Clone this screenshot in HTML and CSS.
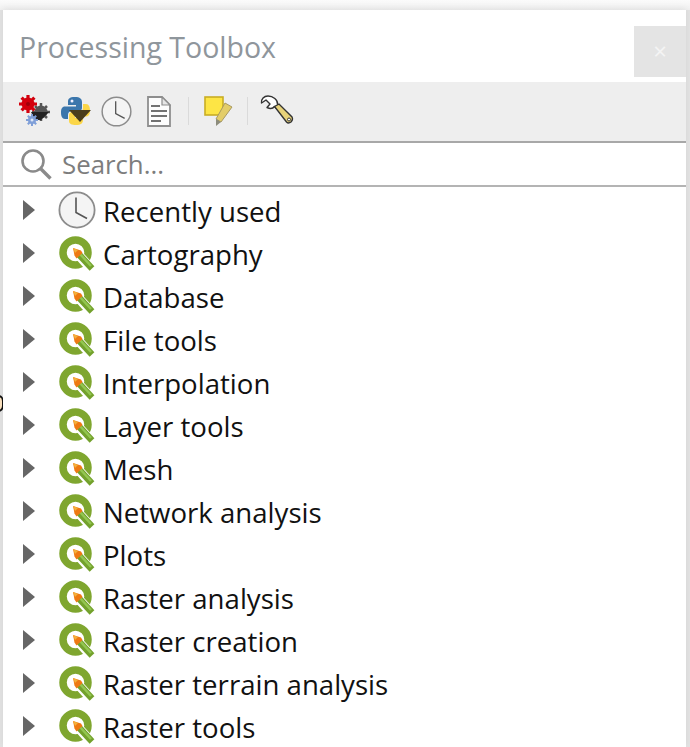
FILE: index.html
```html
<!DOCTYPE html>
<html>
<head>
    <title>Processing Toolbox</title>
    <link rel="stylesheet" href="styles.css">
</head>
<body>
    <svg class="defs" width="0" height="0">
        <symbol id="clock" viewBox="0 0 38 38">
            <circle cx="19" cy="19" r="17.6" fill="#f4f4f4" stroke="#8c8c8c" stroke-width="1.8"/>
            <path d="M18 6.500V21.500L29 27.500" fill="none" stroke="#555" stroke-width="1.600"/>
        </symbol>
        <symbol id="qgis" viewBox="0 0 37 37">
            <circle cx="17.500" cy="17.500" r="12.500" fill="none" stroke="#7fa62f" stroke-width="7.500"/>
            <path d="M17 16L37 38" stroke="#fff" stroke-width="9.500"/>
            <path d="M21 19.500L34 33.500" stroke="#73a12c" stroke-width="6.500"/>
            <path d="M21.500 18.500L33 31" stroke="#93c651" stroke-width="2.500"/>
            <path fill="#ee7913" d="M15 13L23 15.500 24.500 18 18.500 23.500 16.500 20.500Z"/>
            <path fill="#f3b03a" d="M15 13L20 15 17 18Z"/>
        </symbol>
    </svg>

    <span class="behind"></span>

    <div class="panel">
        <div class="title-bar">
            <h1 class="title">Processing Toolbox</h1>
            <div class="close-btn">&times;</div>
        </div>

        <div class="toolbar">
            <svg class="tool tool-gears" viewBox="0 0 34 32">
                <g fill="#555">
                    <circle cx="24" cy="17" r="6.500"/>
                    <path stroke="#555" stroke-width="2.500" d="M24 8V26M15 17H33M18 11L30 23M30 11L18 23"/>
                </g>
                <path fill="#222" d="M14 17H32L24 25H18Z"/>
                <g>
                    <circle cx="11" cy="9" r="6.500" fill="#d3000d"/>
                    <path stroke="#d3000d" stroke-width="3.200" d="M11 0V18M2 9H20M4.600 2.600L17.400 15.400M17.400 2.600L4.600 15.400"/>
                    <circle cx="11" cy="9" r="2" fill="#a0000a"/>
                </g>
                <g>
                    <circle cx="15" cy="25" r="4" fill="#7f9fd8"/>
                    <path stroke="#7f9fd8" stroke-width="2" d="M15 19V31M9 25H21M10.800 20.800L19.200 29.200M19.200 20.800L10.800 29.200"/>
                    <circle cx="15" cy="25" r="1.500" fill="#dce6f6"/>
                </g>
            </svg>
            <svg class="tool tool-python" viewBox="0 0 32 30">
                <path fill="#3b76ac" d="M15 1C9 1 8 3 8 6V9H16V10.500H5C2 10.500 1 13 1 16.500 1 20 2 23 5 23H8V19C8 16 10 15 12 15H19C21 15 22 13.500 22 12V6C22 3 20 1 15 1Z"/>
                <circle cx="12" cy="5" r="1.500" fill="#eef"/>
                <path fill="#fbd648" d="M23 8V12C23 15 21 16 19 16H12C10 16 9 17.500 9 19V25C9 28 12 29 16 29 21 29 23 27 23 24V22H15V20.500H26C29 20.500 30 18 30 14.500 30 11 29 8 26 8Z"/>
                <path fill="#4a3d1c" d="M9 14H31L20 26Z"/>
            </svg>
            <svg class="tool tool-clock"><use href="#clock"/></svg>
            <svg class="tool tool-doc" viewBox="0 0 24 31">
                <path fill="#fdfdfd" stroke="#8e8e8e" stroke-width="1.800" d="M1 1H15L23 9V30H1Z"/>
                <path fill="#e6e6e6" stroke="#8e8e8e" stroke-width="1.200" d="M15 1V9H23Z"/>
                <path fill="none" stroke="#444" stroke-width="1.500" d="M4 10H13M4 15H20M4 20H20M4 25H14"/>
            </svg>
            <span class="sep"></span>
            <svg class="tool tool-edit" viewBox="0 0 30 31">
                <rect x="1" y="1" width="18" height="18" fill="#fde545" stroke="#c9ad24" stroke-width="1.600"/>
                <path fill="#e3cd69" stroke="#a99a62" d="M21 7L28 11 17 26 12 23Z"/>
                <path fill="#8c8c7c" d="M12 23L17 26 12 30Z"/>
            </svg>
            <span class="sep"></span>
            <svg class="tool tool-wrench" viewBox="0 0 34 32">
                <path fill="#fff" stroke="#333" stroke-width="1.400" stroke-linejoin="round" d="M8 1C4 1 1 4 1.500 8L6 5 10 9 7 12.500C10 14 13 13.500 14.500 11.500L16 13 19 10.500 17.500 9C18 5 13 1 8 1Z"/>
                <path fill="#e7d27a" stroke="#333" stroke-width="1.400" d="M14.500 11.500L19 9 32 22C33 24 32 26 31 27 29 28.500 27.500 28 26.500 27Z"/>
                <circle cx="29" cy="24.500" r="1.500" fill="#fff" stroke="#333"/>
            </svg>
        </div>

        <div class="search">
            <svg class="search-icon" viewBox="0 0 32 32">
                <circle cx="13" cy="13" r="10.500" fill="none" stroke="#8a8a8a" stroke-width="2.600"/>
                <path d="M20.500 20.500L30.500 30.500" stroke="#8a8a8a" stroke-width="3.400"/>
            </svg>
            <span class="search-text">Search...</span>
        </div>

        <ul class="tree">
            <li class="row"><span class="arrow"></span><svg class="icon-clock"><use href="#clock"/></svg><span>Recently used</span></li>
            <li class="row"><span class="arrow"></span><svg class="icon"><use href="#qgis"/></svg><span>Cartography</span></li>
            <li class="row"><span class="arrow"></span><svg class="icon"><use href="#qgis"/></svg><span>Database</span></li>
            <li class="row"><span class="arrow"></span><svg class="icon"><use href="#qgis"/></svg><span>File tools</span></li>
            <li class="row"><span class="arrow"></span><svg class="icon"><use href="#qgis"/></svg><span>Interpolation</span></li>
            <li class="row"><span class="arrow"></span><svg class="icon"><use href="#qgis"/></svg><span>Layer tools</span></li>
            <li class="row"><span class="arrow"></span><svg class="icon"><use href="#qgis"/></svg><span>Mesh</span></li>
            <li class="row"><span class="arrow"></span><svg class="icon"><use href="#qgis"/></svg><span>Network analysis</span></li>
            <li class="row"><span class="arrow"></span><svg class="icon"><use href="#qgis"/></svg><span>Plots</span></li>
            <li class="row"><span class="arrow"></span><svg class="icon"><use href="#qgis"/></svg><span>Raster analysis</span></li>
            <li class="row"><span class="arrow"></span><svg class="icon"><use href="#qgis"/></svg><span>Raster creation</span></li>
            <li class="row"><span class="arrow"></span><svg class="icon"><use href="#qgis"/></svg><span>Raster terrain analysis</span></li>
            <li class="row"><span class="arrow"></span><svg class="icon"><use href="#qgis"/></svg><span>Raster tools</span></li>
        </ul>
    </div>
</body>
</html>
```

FILE: styles.css
```css
html, body {
    margin: 0;
    height: 100%;
    overflow: hidden;
}

body {
    background: linear-gradient(#fbfbfb, #f0f0f0 10px, #e2e2e2 10px);
    font-family: "Open Sans", "Noto Sans", sans-serif;
}

.defs {
    display: block;
    height: 0;
}

/* bit of the window under the panel, sticks out on the left */
.behind {
    position: absolute;
    left: -8px;
    top: 395px;
    width: 8px;
    height: 13px;
    border: 2px solid #111;
    border-radius: 6px;
    background: #fde3c0;
}

.panel {
    position: relative;
    margin: 10px 4px 0 3px;
    height: 737px;
    background: #fff;
    box-shadow: 0 -2px 6px rgba(0, 0, 0, 0.06);
}

.title-bar {
    height: 72px;
    box-sizing: border-box;
    padding: 15px 0 0 16px;
    display: flex;
    justify-content: space-between;
    align-items: flex-start;
}

.title {
    margin: 0;
    font-size: 28.500px;
    font-weight: 400;
    line-height: 44px;
    color: #8f969c;
}

.close-btn {
    width: 52px;
    height: 51px;
    margin-top: 1px;
    background: #e4e4e4;
    color: #f4f4f4;
    font-size: 24px;
    line-height: 50px;
    text-align: center;
}

.toolbar {
    height: 59px;
    background: #eeeeee;
    display: flex;
    align-items: center;
    box-sizing: border-box;
    padding: 0 0 1px 14px;
}

.tool {
    display: block;
    flex: none;
}

.tool-gears { width: 34px; height: 32px; margin-right: 9px; }
.tool-python { width: 32px; height: 30px; margin-right: 9px; }
.tool-clock { width: 31px; height: 31px; margin-right: 15px; }
.tool-doc { width: 24px; height: 31px; margin-right: 17px; }
.tool-edit { width: 30px; height: 31px; margin-left: 15px; margin-right: 13px; }
.tool-wrench { width: 34px; height: 32px; margin-left: 12px; }

.sep {
    width: 1px;
    height: 28px;
    background: #dadada;
    flex: none;
}

.search {
    height: 46px;
    box-sizing: border-box;
    border-top: 2px solid #a8a8a8;
    border-bottom: 2px solid #b4b4b4;
    background: #fff;
    display: flex;
    align-items: center;
    padding-left: 17px;
}

.search-icon {
    width: 32px;
    height: 32px;
    margin-right: 10px;
    flex: none;
}

.search-text {
    font-size: 25.800px;
    color: #7d7d7d;
}

.tree {
    list-style: none;
    margin: 0;
    padding: 2px 0 0;
}

.row {
    height: 43px;
    display: flex;
    align-items: center;
    font-size: 27.600px;
    color: #111;
    white-space: nowrap;
}

.arrow {
    width: 0;
    height: 0;
    margin-left: 20px;
    margin-right: 23px;
    border-left: 12px solid #666;
    border-top: 10px solid transparent;
    border-bottom: 10px solid transparent;
    flex: none;
    transform: translateY(-1px);
}

.icon {
    width: 37px;
    height: 37px;
    margin-right: 8px;
    flex: none;
}

.icon-clock {
    width: 38px;
    height: 38px;
    margin-right: 7px;
    flex: none;
    transform: translateY(-1px);
}
```
